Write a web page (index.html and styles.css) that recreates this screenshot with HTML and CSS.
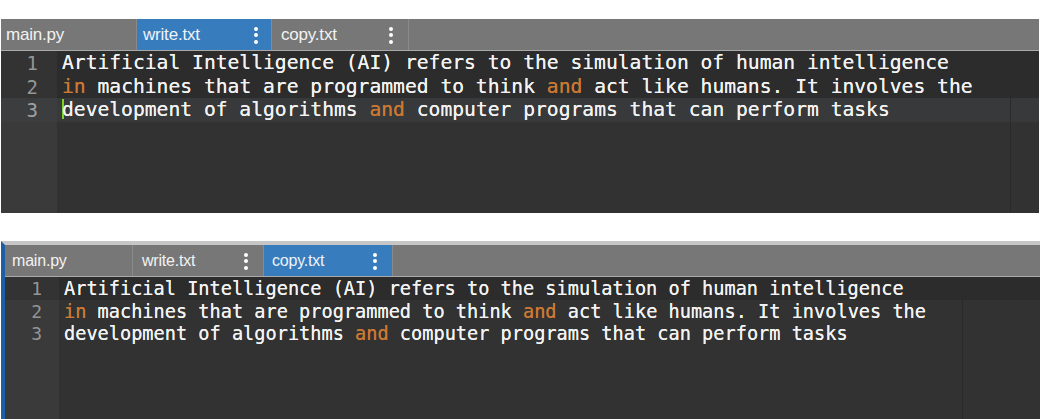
FILE: index.html
```html
<!DOCTYPE html>
<html>
<head>
<meta charset="utf-8">
<link rel="stylesheet" href="styles.css">
</head>
<body>
<div class="panel panel-top">
  <div class="tabbar">
    <div class="tab tab-main">main.py</div>
    <div class="tab tab-file active"><span>write.txt</span><span class="kebab"><i></i><i></i><i></i></span></div>
    <div class="tab tab-file"><span>copy.txt</span><span class="kebab"><i></i><i></i><i></i></span></div>
  </div>
  <div class="editor">
    <div class="gutter">
      <div class="ln dark">1</div>
      <div class="ln dark">2</div>
      <div class="ln act">3</div>
    </div>
    <div class="code">
      <div class="line dark">Artificial Intelligence (AI) refers to the simulation of human intelligence</div>
      <div class="line dark"><span class="kw">in</span> machines that are programmed to think <span class="kw">and</span> act like humans. It involves the</div>
      <div class="line act"><span class="cursor"></span>development of algorithms <span class="kw">and</span> computer programs that can perform tasks</div>
      <div class="margin"></div>
    </div>
  </div>
</div>

<div class="panel panel-bottom">
  <div class="tabbar">
    <div class="tab tab-main">main.py</div>
    <div class="tab tab-file"><span>write.txt</span><span class="kebab"><i></i><i></i><i></i></span></div>
    <div class="tab tab-file active"><span>copy.txt</span><span class="kebab"><i></i><i></i><i></i></span></div>
  </div>
  <div class="editor">
    <div class="gutter">
      <div class="ln dark">1</div>
      <div class="ln">2</div>
      <div class="ln">3</div>
    </div>
    <div class="code">
      <div class="line dark">Artificial Intelligence (AI) refers to the simulation of human intelligence</div>
      <div class="line"><span class="kw">in</span> machines that are programmed to think <span class="kw">and</span> act like humans. It involves the</div>
      <div class="line">development of algorithms <span class="kw">and</span> computer programs that can perform tasks</div>
      <div class="margin"></div>
    </div>
  </div>
</div>
</body>
</html>
```

FILE: styles.css
```css
html, body {
  margin: 0;
  padding: 0;
  background: #ffffff;
  overflow: hidden;
}
body {
  padding: 19px 0 0 1px;
  font-family: "Liberation Sans", Arial, sans-serif;
}
.panel {
  display: flex;
  flex-direction: column;
}
.panel-top {
  width: 1038px;
  height: 194px;
}
.panel-bottom {
  margin-top: 28px;
  width: 1035px;
  height: 174px;
  border-left: 4px solid #1d5fa6;
  border-top: 4px solid #c6c6c6;
}
.tabbar {
  display: flex;
  height: 31px;
  background: #777777;
  border-bottom: 1px solid #a9a9a9;
  flex: none;
}
.tab {
  display: flex;
  align-items: center;
  justify-content: space-between;
  color: #f2f2f2;
  border-right: 1px solid #8a8a8a;
  box-sizing: border-box;
  padding-top: 1px;
}
.panel-top .tab { font-size: 17px; letter-spacing: -0.2px; }
.panel-bottom .tab { font-size: 16px; letter-spacing: -0.2px; }
.panel-top .tab-main { width: 136px; padding-left: 5px; }
.panel-top .tab-file { width: 135px; padding-right: 13px; padding-left: 6px; }
.panel-top .tab-file + .tab-file { width: 137px; padding-left: 9px; padding-right: 15px; }
.panel-bottom .tab-main { width: 128px; padding-left: 7px; }
.panel-bottom .tab-file { width: 131px; padding-right: 15px; padding-left: 9px; }
.panel-bottom .tab-file.active { width: 129px; padding-left: 8px; }
.tab.active {
  background: #377cbc;
  color: #eef3fa;
}
.kebab {
  display: flex;
  flex-direction: column;
  gap: 2.5px;
}
.kebab i {
  display: block;
  width: 4px;
  height: 4px;
  border-radius: 50%;
  background: #ffffff;
}
.editor {
  flex: 1;
  display: flex;
  background: #323232;
  min-height: 0;
}
.gutter {
  background: #3a3a3a;
  color: #959595;
  text-align: right;
  box-sizing: border-box;
  font-family: "DejaVu Sans Mono", monospace;
}
.panel-top .gutter { width: 56px; padding-right: 19px; font-size: 19px; }
.panel-bottom .gutter { width: 54px; padding-right: 17px; font-size: 18px; }
.code {
  position: relative;
  flex: 1;
  color: #f2f2f2;
  font-family: "DejaVu Sans Mono", monospace;
  text-shadow: 0 0 0.4px currentColor;
}
.panel-top .code { font-size: 19.65px; }
.panel-bottom .code { font-size: 18.6px; }
.panel-top .ln, .panel-top .line { height: 23.5px; line-height: 24.5px; }
.panel-bottom .ln, .panel-bottom .line { height: 22.5px; line-height: 23px; }
.gutter .ln { margin-right: -19px; padding-right: 19px; }
.panel-bottom .gutter .ln { margin-right: -17px; padding-right: 17px; }
.line { padding-left: 5px; white-space: pre; }
.ln.dark { background: #333333; }
.line.dark { background: #2c2c2c; }
.ln.act { background: #3c3d3f; color: #a0a0a0; }
.line.act { background: #38393b; }
.kw { color: #cc7832; }
.cursor {
  display: inline-block;
  width: 2px;
  height: 20px;
  background: #7ed321;
  vertical-align: middle;
  margin-right: -2px;
  margin-top: -3px;
}
.margin {
  position: absolute;
  top: 0;
  bottom: 0;
  width: 1px;
  background: #2a2a2a;
}
.panel-top .margin { left: 953px; }
.panel-bottom .margin { left: 903px; }
```
